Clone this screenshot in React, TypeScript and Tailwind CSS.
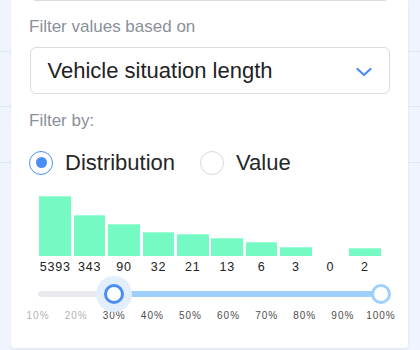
import React from "react";

const bars = [
  { v: "5393", h: 60 },
  { v: "343", h: 41 },
  { v: "90", h: 32 },
  { v: "32", h: 24 },
  { v: "21", h: 22 },
  { v: "13", h: 18 },
  { v: "6", h: 14 },
  { v: "3", h: 9 },
  { v: "0", h: 0 },
  { v: "2", h: 8 },
];

const ticks = ["10%", "20%", "30%", "40%", "50%", "60%", "70%", "80%", "90%", "100%"];

export default function App() {
  return (
    <div
      className="relative w-[420px] h-[350px] overflow-hidden bg-[#eff4fe]"
      style={{ fontFamily: '"Liberation Sans", Arial, sans-serif' }}
    >
      {/* background table rows */}
      <div className="flex flex-col">
        <div className="h-[52px] border-b border-[#dfe6f1]" />
        <div className="h-[55px] border-b border-[#dfe6f1]" />
        <div className="h-[56px] border-b border-[#dfe6f1]" />
      </div>

      {/* popover panel */}
      <div className="absolute left-[11px] top-0 w-[397px] bg-white rounded-b-[4px] shadow-[0_1px_3px_rgba(40,70,130,0.08)] px-[18px] pb-[26px]">
        {/* previous input, only bottom visible */}
        <div className="h-[40px] -mt-[39px] rounded-[6px] border border-[#dcdcdc] ml-[0.5px] w-[360px]" />

        <div className="mt-[16px] text-[17px] leading-[20px] text-[#8b9099]">Filter values based on</div>

        <div className="mt-[10px] h-[47px] w-[360px] ml-[0.5px] rounded-[6px] border border-[#dcdcdc] flex items-center justify-between pl-[17px] pr-[17px]">
          <span className="text-[22px] text-[#222]">Vehicle situation length</span>
          <svg width="16" height="10" viewBox="0 0 16 10" className="mt-[2px]">
            <polyline points="1.5,2 8,8 14.5,2" fill="none" stroke="#4a8cf5" strokeWidth="2.2" strokeLinecap="round" strokeLinejoin="round" />
          </svg>
        </div>

        <div className="mt-[17px] text-[17px] leading-[20px] text-[#8b9099]">Filter by:</div>

        <div className="mt-[19.5px] h-[24px] flex items-center">
          <div className="w-[24px] h-[24px] rounded-full border-[1.5px] border-[#4a8ef5] flex items-center justify-center">
            <div className="w-[11px] h-[11px] rounded-full bg-[#4a8ef5]" />
          </div>
          <span className="ml-[12px] text-[22px] leading-[24px] text-[#262626]">Distribution</span>
          <div className="ml-[25px] w-[24px] h-[24px] rounded-full border border-[#d9d9d9]" />
          <span className="ml-[12px] text-[22px] leading-[24px] text-[#262626]">Value</span>
        </div>

        {/* histogram */}
        <div className="ml-[9px] w-[344px] mt-[21.5px]">
          <div className="grid grid-cols-10 h-[60px] items-end">
            {bars.map((b, i) => (
              <div key={i} className="px-[1.4px] flex items-end h-full">
                <div
                  className="w-full bg-[#76fac4] border-t border-[#9ffcd8]"
                  style={{ height: b.h, borderTopWidth: b.h ? 1 : 0 }}
                />
              </div>
            ))}
          </div>
          <div className="grid grid-cols-10 mt-[4px]">
            {bars.map((b, i) => (
              <div key={i} className="text-center text-[12.5px] leading-[15px] tracking-[0.8px] text-[#222]">
                {b.v}
              </div>
            ))}
          </div>
        </div>

        {/* slider */}
        <div className="relative ml-[9px] w-[343px] h-[28px] mt-[4.5px]">
          <div className="absolute left-0 right-0 top-[11px] h-[6px] rounded-full bg-[#e8e9ec]" />
          <div className="absolute left-[76px] right-0 top-[11px] h-[6px] rounded-r-full bg-[#9fd0fb]" />
          <div className="absolute left-[58px] top-[-4px] w-[36px] h-[36px] rounded-full bg-[#e3eefd]" />
          <div className="absolute left-[66px] top-[4px] w-[20px] h-[20px] rounded-full bg-white border-[3px] border-[#4a8ef5]" />
          <div className="absolute left-[333px] top-[4px] w-[20px] h-[20px] rounded-full bg-white border-[3px] border-[#9fd0fb]" />
        </div>

        <div className="-ml-[10px] mt-[2.5px] w-[381px] grid grid-cols-10">
          {ticks.map((t, i) => (
            <div
              key={t}
              className={
                "text-center text-[10px] leading-[12px] tracking-[1px] " +
                (i < 2 ? "text-[#b3b3b3]" : "text-[#4d4d4d]")
              }
            >
              {t}
            </div>
          ))}
        </div>
      </div>
    </div>
  );
}
